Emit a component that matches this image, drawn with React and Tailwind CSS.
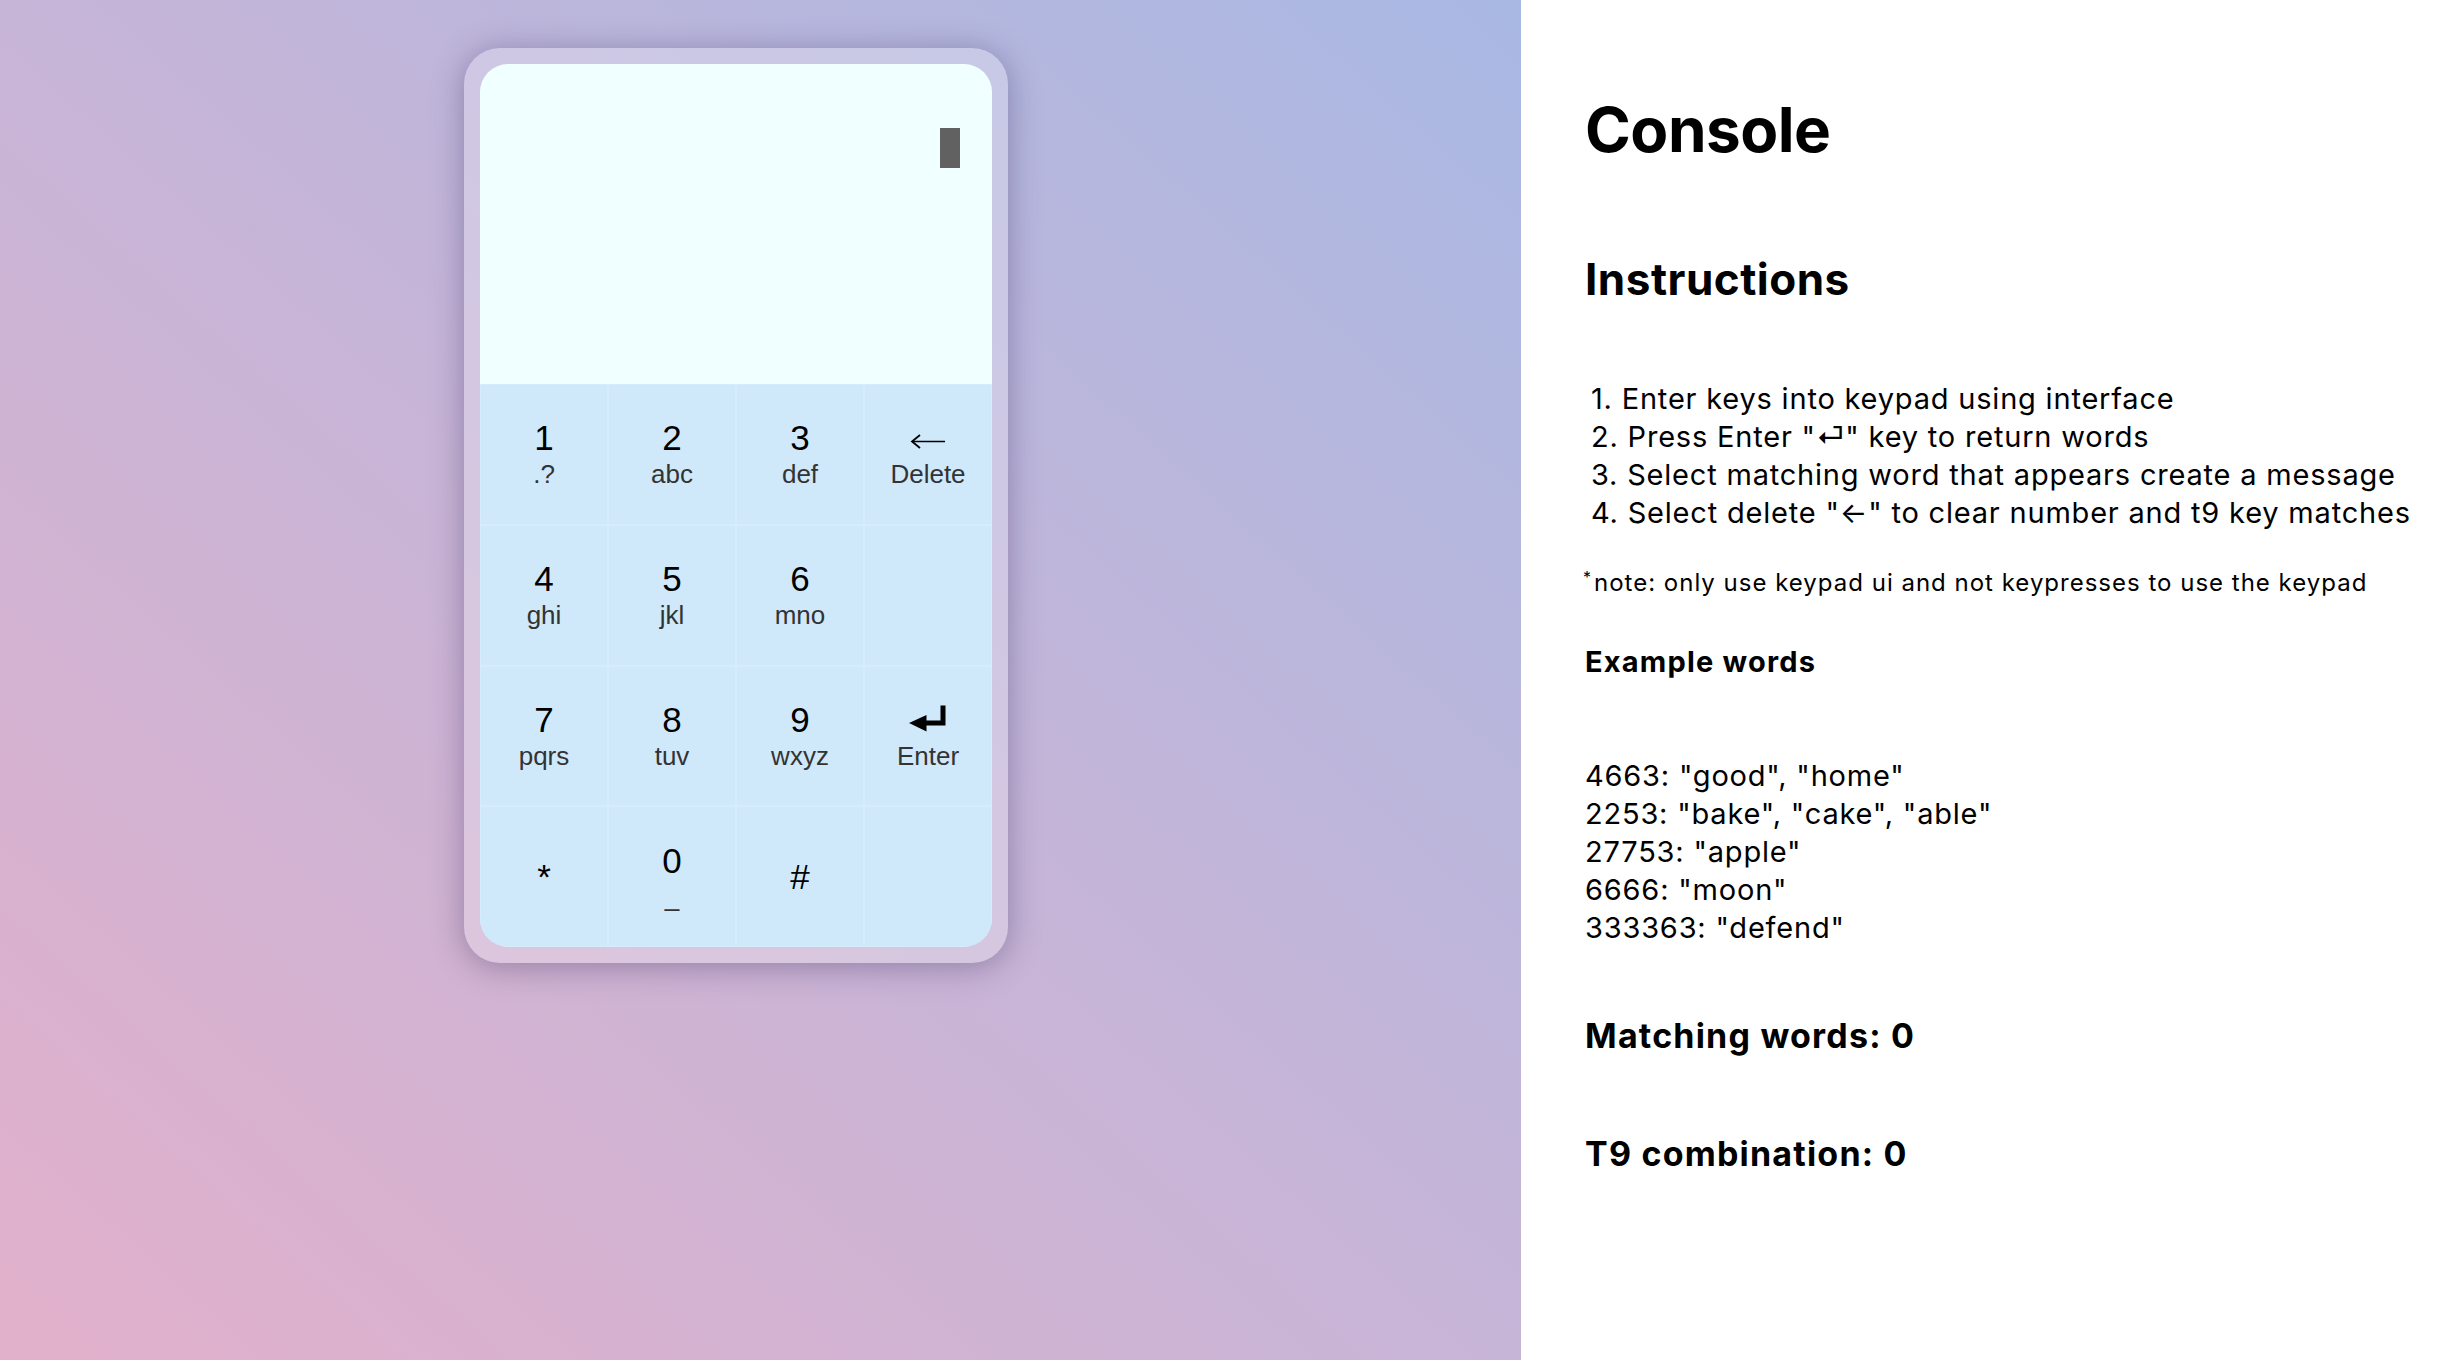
import React, { useState } from "react";

const keys = [
    { digit: "1", letters: ".?" },
    { digit: "2", letters: "abc" },
    { digit: "3", letters: "def" },
    { type: "delete" },
    { digit: "4", letters: "ghi" },
    { digit: "5", letters: "jkl" },
    { digit: "6", letters: "mno" },
    { type: "empty" },
    { digit: "7", letters: "pqrs" },
    { digit: "8", letters: "tuv" },
    { digit: "9", letters: "wxyz" },
    { type: "enter" },
    { digit: "*" },
    { digit: "0", letters: "_" },
    { digit: "#" },
    { type: "empty" },
];

const examples = [
    '4663: "good", "home"',
    '2253: "bake", "cake", "able"',
    '27753: "apple"',
    '6666: "moon"',
    '333363: "defend"',
];

const DeleteArrow = () => (
    <svg width="36" height="38" viewBox="0 0 36 38" fill="none">
        <path d="M2 22.5 H35" stroke="#000" strokeWidth="1.6" />
        <path d="M10 16 L2 22.5 L10 29" stroke="#000" strokeWidth="1.8" strokeLinejoin="miter" />
    </svg>
);

const EnterArrow = () => (
    <svg width="38" height="38" viewBox="0 0 38 38" fill="none">
        <path d="M34 4.5 V22 H16" stroke="#000" strokeWidth="5" strokeLinejoin="miter" />
        <path d="M0 22 L17.5 14 L17.5 30.5 Z" fill="#000" />
    </svg>
);

const Key = ({ item, onPress }) => {
    if (item.type === "empty") {
        return <div className="border border-[#d4ecfc]" />;
    }

    let top = <span className="h-[38px] leading-[38px] text-[35px] text-black">{item.digit}</span>;
    let bottom = item.letters;
    if (item.type === "delete") {
        top = <span className="h-[38px] flex"><DeleteArrow /></span>;
        bottom = "Delete";
    }
    if (item.type === "enter") {
        top = <span className="h-[38px] flex"><EnterArrow /></span>;
        bottom = "Enter";
    }

    return (
        <button
            className="border border-[#d4ecfc] flex flex-col items-center justify-center"
            onClick={() => onPress(item)}
        >
            {top}
            {bottom && (
                <span className="mt-[2px] h-[30px] leading-[30px] text-[26px] text-[#333333]">{bottom}</span>
            )}
        </button>
    );
};

export default function App() {
    const [input, setInput] = useState("");

    const handlePress = (item) => {
        if (item.type === "delete") {
            setInput("");
            return;
        }
        if (item.type === "enter") return;
        setInput((prev) => prev + item.digit);
    };

    return (
        <div className="flex min-h-screen w-full" style={{ fontFamily: '"Liberation Sans", Arial, sans-serif' }}>
            {/* left side: keypad */}
            <div className="w-[1521px] shrink-0 bg-linear-to-tr from-[#e2b0cb] to-[#a8b8e3] pl-[464px] pt-[48px]">
                <div className="w-[544px] h-[915px] p-[16px] rounded-[36px] bg-white/25 shadow-[0_4px_32px_rgba(40,30,80,0.35)]">
                    <div className="h-full rounded-[28px] overflow-hidden flex flex-col">
                        <div className="h-[320px] bg-[#f0ffff] flex justify-end pt-[64px] pr-[32px]">
                            <span className="text-[33px] text-black mr-2">{input}</span>
                            <div className="w-[20px] h-[40px] bg-[#616161]" />
                        </div>
                        <div className="flex-1 grid grid-cols-4 grid-rows-4 bg-[#cfe9fb]">
                            {keys.map((item, i) => (
                                <Key key={i} item={item} onPress={handlePress} />
                            ))}
                        </div>
                    </div>
                </div>
            </div>

            {/* right side: console */}
            <div className="flex-1 bg-white pl-[64px] text-black" style={{ fontFamily: "Inter, 'Noto Sans', sans-serif" }}>
                <h1 className="mt-[94px] text-[62px] leading-[72px] font-bold tracking-[-0.5px]">Console</h1>
                <h2 className="mt-[87px] text-[44px] leading-[52px] font-bold tracking-[0.5px]">Instructions</h2>
                <div className="mt-[75px] pl-[6px] text-[29px] leading-[38px] tracking-[0.8px]">
                    <div>1. Enter keys into keypad using interface</div>
                    <div>2. Press Enter "⏎" key to return words</div>
                    <div>3. Select matching word that appears create a message</div>
                    <div>4. Select delete "←" to clear number and t9 key matches</div>
                </div>
                <p className="mt-[36px] text-[24px] leading-[30px] tracking-[1px]">
                    <sup className="text-[16px] -ml-[2px] mr-[2px]">*</sup>note: only use keypad ui and not keypresses to use the keypad
                </p>
                <h4 className="mt-[47px] text-[29px] leading-[34px] font-bold tracking-[1.2px]">Example words</h4>
                <div className="mt-[78px] text-[29px] leading-[38px] tracking-[0.8px]">
                    {examples.map((line) => (
                        <div key={line}>{line}</div>
                    ))}
                </div>
                <h3 className="mt-[69px] text-[34px] leading-[40px] font-bold tracking-[1.2px]">Matching words: 0</h3>
                <h3 className="mt-[78px] text-[34px] leading-[40px] font-bold tracking-[1.2px]">T9 combination: {input.length}</h3>
            </div>
        </div>
    );
}
